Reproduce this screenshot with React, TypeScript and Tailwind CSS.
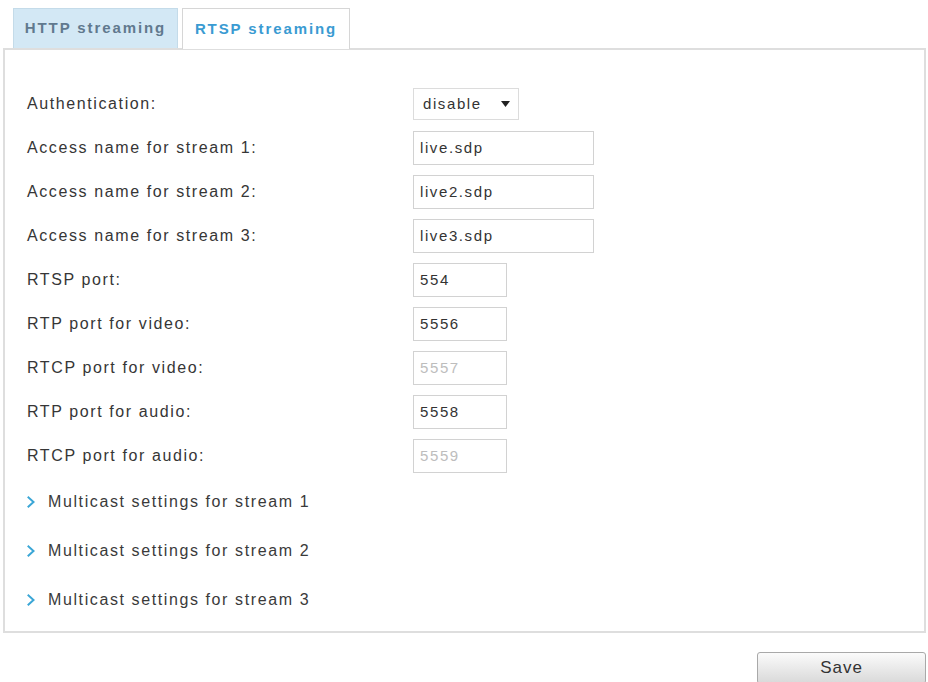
const font = { fontFamily: '"Liberation Sans", Arial, sans-serif' };

const fields = [
  { label: "Authentication:", kind: "select", value: "disable" },
  { label: "Access name for stream 1:", kind: "wide", value: "live.sdp" },
  { label: "Access name for stream 2:", kind: "wide", value: "live2.sdp" },
  { label: "Access name for stream 3:", kind: "wide", value: "live3.sdp" },
  { label: "RTSP port:", kind: "port", value: "554" },
  { label: "RTP port for video:", kind: "port", value: "5556" },
  { label: "RTCP port for video:", kind: "port", value: "5557", disabled: true },
  { label: "RTP port for audio:", kind: "port", value: "5558" },
  { label: "RTCP port for audio:", kind: "port", value: "5559", disabled: true },
];

const Chevron = () => (
  <svg width="9" height="12" viewBox="0 0 9 12" className="shrink-0">
    <path d="M1.5 1.5 L6.5 6 L1.5 10.5" fill="none" stroke="#3aa6d6" strokeWidth="2" strokeLinecap="square" />
  </svg>
);

const Field = ({ f }: { f: (typeof fields)[number] }) => {
  if (f.kind === "select")
    return (
      <div className="flex items-center justify-between w-[106px] h-[32px] border border-[#dcdcdc] pl-[9px] pr-[8px] text-[#333] text-[15px]">
        <span>{f.value}</span>
        <svg width="9" height="6" viewBox="0 0 9 6"><path d="M0 0 H9 L4.5 6 Z" fill="#222" /></svg>
      </div>
    );
  return (
    <div
      className={`flex items-center h-[34px] border border-[#d2d2d2] pl-[6px] text-[15px] ${f.kind === "wide" ? "w-[181px]" : "w-[94px]"} ${f.disabled ? "text-[#bdbdbd]" : "text-[#333]"}`}
    >
      {f.value}
    </div>
  );
};

export default function App() {
  return (
    <div className="min-h-screen bg-white pt-[8px] pl-[3px] pr-[2px] text-[16px] tracking-[1.6px]" style={font}>
      <div className="flex gap-[4px] pl-[10px] text-[15px] tracking-[1.9px]">
        <div className="w-[165px] h-[40px] flex items-center justify-center bg-[#d3e8f5] border border-[#c4dbe9] border-b-0 font-bold text-[#61798e]">
          HTTP streaming
        </div>
        <div className="w-[168px] h-[41px] -mb-px relative z-10 flex items-center justify-center bg-white border border-[#d6d6d6] border-b-0 font-bold text-[#3a9bd2]">
          RTSP streaming
        </div>
      </div>
      <div className="border-2 border-[#dedede] pt-[32px] pl-[22px] pb-[7px]">
        {fields.map((f) => (
          <div key={f.label} className="flex items-center h-[44px]">
            <div className="w-[386px] text-[#363636]">{f.label}</div>
            <Field f={f} />
          </div>
        ))}
        <div className="mt-[-1px]">
          {[1, 2, 3].map((n) => (
            <div key={n} className="flex items-center h-[49px] gap-[12px] text-[#3a3a3a]">
              <Chevron />
              <span>Multicast settings for stream {n}</span>
            </div>
          ))}
        </div>
      </div>
      <div className="flex justify-end mt-[19px]">
        <button className="w-[169px] h-[32px] rounded-[3px] border border-[#a9a9a9] bg-gradient-to-b from-[#fbfbfb] to-[#d9d9d9] text-[#333] text-[17px] tracking-[1px]">
          Save
        </button>
      </div>
    </div>
  );
}
